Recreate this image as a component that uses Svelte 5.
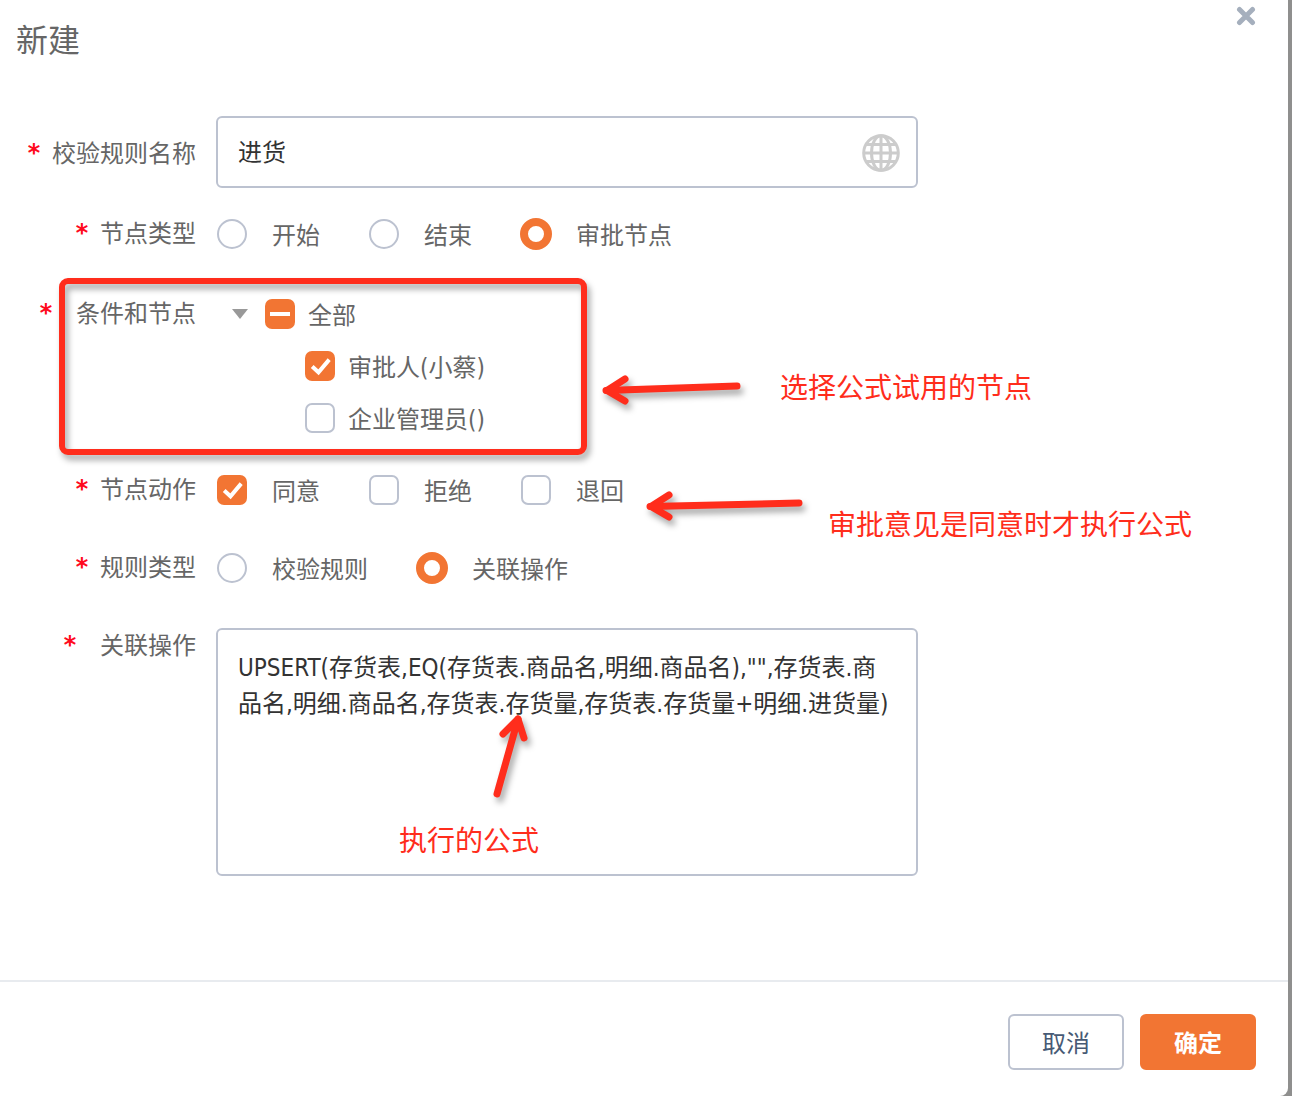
<script>
  let name = $state('进货');
  let nodeType = $state('approve');
  let ruleType = $state('action');
  let formula = $state('UPSERT(存货表,EQ(存货表.商品名,明细.商品名),"",存货表.商品名,明细.商品名,存货表.存货量,存货表.存货量+明细.进货量)');

  const nodeTypes = [
    { value: 'start', label: '开始' },
    { value: 'end', label: '结束' },
    { value: 'approve', label: '审批节点' }
  ];
  const ruleTypes = [
    { value: 'check', label: '校验规则' },
    { value: 'action', label: '关联操作' }
  ];
  let people = $state([
    { label: '审批人(小蔡)', checked: true },
    { label: '企业管理员()', checked: false }
  ]);
  let actions = $state([
    { label: '同意', checked: true },
    { label: '拒绝', checked: false },
    { label: '退回', checked: false }
  ]);
  let allChecked = $derived(people.every((p) => p.checked));
  let someChecked = $derived(people.some((p) => p.checked) && !allChecked);

  function toggleAll(e) {
    for (const p of people) p.checked = e.currentTarget.checked;
  }
</script>

{#snippet tick()}
  <svg class="mark" viewBox="0 0 30 30" aria-hidden="true">
    <path d="M7.2 15.5 L13.5 21.3 L24.2 8.6" fill="none" stroke="#fff" stroke-width="4" />
  </svg>
{/snippet}

<div class="backdrop">
  <div class="dialog" role="dialog" aria-labelledby="title">
    <header>
      <h1 id="title">新建</h1>
      <button class="close" type="button" aria-label="关闭">
        <svg viewBox="0 0 20 20" width="20" height="20" aria-hidden="true">
          <path d="M3.5 3.5 L16.5 16.5 M16.5 3.5 L3.5 16.5" stroke="#a5afbd" stroke-width="5" stroke-linecap="round" />
        </svg>
      </button>
    </header>

    <form id="rule">
      <div class="row name">
        <label class="caption" for="name"><i>*</i>校验规则名称</label>
        <div class="box text">
          <input id="name" type="text" bind:value={name} />
          <button type="button" class="globe" aria-label="多语言">
            <svg viewBox="0 0 38 38" width="38" height="38" fill="none" stroke="#ccc" stroke-width="3" aria-hidden="true">
              <circle cx="19" cy="19" r="17.3" />
              <ellipse cx="19" cy="19" rx="9.5" ry="17.3" />
              <path d="M19 2V36M2 19H36M5 10.5H33M5 27.5H33" />
            </svg>
          </button>
        </div>
      </div>

      <div class="row type" role="radiogroup" aria-labelledby="l-type">
        <span class="caption" id="l-type"><i>*</i>节点类型</span>
        <div class="options">
          {#each nodeTypes as t}
            <label class="option"><span class="slot"><input type="radio" name="nodeType" value={t.value} bind:group={nodeType} /></span><span class="word">{t.label}</span></label>
          {/each}
        </div>
      </div>

      <div class="row nodes" role="group" aria-labelledby="l-nodes">
        <span class="caption wide" id="l-nodes"><i>*</i>条件和节点</span>
        <div class="tree">
          <div class="branch">
            <button type="button" class="caret" aria-label="收起">
              <svg viewBox="0 0 16 10" width="16" height="10" aria-hidden="true"><path d="M0 0H16L8 10Z" fill="#999" /></svg>
            </button>
            <label class="option near">
              <span class="slot">
                <input type="checkbox" checked={allChecked} indeterminate={someChecked} onchange={toggleAll} />
                {#if someChecked}
                  <svg class="mark" viewBox="0 0 30 30" aria-hidden="true"><path d="M5 15H25" stroke="#fff" stroke-width="4" /></svg>
                {:else if allChecked}{@render tick()}{/if}
              </span>
              <span class="word">全部</span>
            </label>
          </div>
          {#each people as p}
            <label class="option near leaf">
              <span class="slot"><input type="checkbox" bind:checked={p.checked} />{#if p.checked}{@render tick()}{/if}</span><span class="word">{p.label}</span>
            </label>
          {/each}
        </div>
      </div>

      <div class="row actions" role="group" aria-labelledby="l-actions">
        <span class="caption" id="l-actions"><i>*</i>节点动作</span>
        <div class="options">
          {#each actions as a}
            <label class="option"><span class="slot"><input type="checkbox" bind:checked={a.checked} />{#if a.checked}{@render tick()}{/if}</span><span class="word">{a.label}</span></label>
          {/each}
        </div>
      </div>

      <div class="row rules" role="radiogroup" aria-labelledby="l-rules">
        <span class="caption" id="l-rules"><i>*</i>规则类型</span>
        <div class="options">
          {#each ruleTypes as t}
            <label class="option"><span class="slot"><input type="radio" name="ruleType" value={t.value} bind:group={ruleType} /></span><span class="word">{t.label}</span></label>
          {/each}
        </div>
      </div>

      <div class="row formula">
        <label class="caption wide" for="formula"><i>*</i>关联操作</label>
        <textarea class="box" id="formula" spellcheck="false" bind:value={formula}></textarea>
      </div>

      <!-- Hand-drawn notes laid over the form -->
      <div class="notes">
        <div class="frame"></div>
        <svg class="arrow a1" viewBox="0 0 160 60" width="160" height="60" aria-hidden="true">
          <path d="M25 19 L7 30.5 L25 41" />
          <path d="M6 30.5 L137 26" />
          <path class="tip" d="M4 30 L20 21 L18 30 L20 39 Z" />
        </svg>
        <svg class="arrow a2" viewBox="0 0 180 60" width="180" height="60" aria-hidden="true">
          <path d="M25 19 L7 30.5 L25 41" />
          <path d="M6 30.5 L155 27" />
          <path class="tip" d="M4 30 L20 21 L18 30 L20 39 Z" />
        </svg>
        <svg class="arrow a3" viewBox="0 0 60 100" width="60" height="100" aria-hidden="true">
          <path d="M13 22 L28 7 L34 26" />
          <path d="M28 7 L7 82" />
          <path class="tip" d="M28 5 L17 19 L26 18 L33 22 Z" />
        </svg>
        <p class="n1">选择公式试用的节点</p>
        <p class="n2">审批意见是同意时才执行公式</p>
        <p class="n3">执行的公式</p>
      </div>
    </form>

    <footer>
      <button type="button" class="btn">取消</button>
      <button type="submit" form="rule" class="btn primary">确定</button>
    </footer>
  </div>
</div>

<style>
  :global(body) {
    margin: 0;
  }
  .backdrop {
    box-sizing: border-box;
    min-height: 100vh;
    display: flex;
    padding-right: 4px;
    background: #8f8f8e;
    font: 24px/52px 'Noto Sans', 'Noto Sans CJK SC', sans-serif;
    color: #666;
  }
  .dialog {
    flex: 1;
    display: flex;
    flex-direction: column;
    background: #fff;
    border-radius: 0 0 8px 0;
  }
  button,
  input,
  textarea {
    font: inherit;
    color: inherit;
    margin: 0;
    padding: 0;
    border: 0;
    background: none;
    outline: 0;
  }
  button {
    cursor: pointer;
  }
  svg {
    display: block;
  }
  header {
    display: flex;
    justify-content: space-between;
    align-items: flex-start;
    height: 116px;
    padding: 0 32px 0 16px;
    box-sizing: border-box;
  }
  h1 {
    margin: 16px 0 0;
    font-size: 32px;
    font-weight: 400;
    line-height: 48px;
  }
  .close {
    margin-top: 6px;
  }
  form {
    position: relative;
    flex: 1;
    padding-bottom: 104px;
  }
  .row {
    display: flex;
    align-items: flex-start;
    gap: 20px;
    padding-right: 32px;
  }
  .type,
  .actions {
    margin-top: 20px;
  }
  .nodes {
    margin-top: 28px;
  }
  .rules {
    margin-top: 26px;
  }
  .formula {
    margin-top: 34px;
  }
  .caption {
    flex: none;
    width: 196px;
    height: 48px;
    display: flex;
    justify-content: flex-end;
    gap: 12px;
    line-height: 50px;
  }
  .name .caption {
    height: 72px;
    line-height: 74px;
  }
  .formula .caption {
    line-height: 34px;
  }
  .caption.wide {
    gap: 24px;
  }
  .caption i {
    width: 12px;
    display: flex;
    justify-content: center;
    font-family: 'DejaVu Sans Mono', monospace;
    font-style: normal;
    font-weight: 700;
    color: #ff0a1e;
  }
  .box {
    flex: 1;
    box-sizing: border-box;
    min-width: 0;
    max-width: 702px;
    border: 2px solid #bcc2d0;
    border-radius: 6px;
    color: #333;
  }
  .text {
    display: flex;
    align-items: center;
    height: 72px;
    padding: 0 16px 0 20px;
  }
  .text input {
    flex: 1;
    min-width: 0;
    line-height: 36px;
  }
  .globe {
    padding-top: 2px;
  }
  textarea {
    height: 248px;
    padding: 20px;
    font-family: 'DejaVu Sans Condensed', 'Noto Sans CJK SC', sans-serif;
    line-height: 36px;
    resize: none;
    overflow: hidden;
    word-break: break-all;
  }
  .options {
    display: flex;
    gap: 48px;
  }
  .option {
    display: flex;
    align-items: center;
    gap: 24px;
    height: 52px;
  }
  .option.near {
    gap: 12px;
  }
  .word {
    padding-top: 2px;
  }
  .slot {
    display: grid;
    place-items: center;
    width: 32px;
    height: 32px;
  }
  .slot > * {
    grid-area: 1 / 1;
  }
  .slot input {
    appearance: none;
    box-sizing: border-box;
    width: 30px;
    height: 30px;
    border: 2px solid #bcc2d0;
    border-radius: 7px;
  }
  .slot input[type='radio'] {
    border-radius: 50%;
  }
  .slot input[type='checkbox']:checked,
  .slot input[type='checkbox']:indeterminate {
    border: 0;
    background: #f27533;
  }
  .slot input[type='radio']:checked {
    width: 32px;
    height: 32px;
    border: 8px solid #f27533;
  }
  .mark {
    width: 30px;
    height: 30px;
    pointer-events: none;
  }
  .branch {
    display: flex;
    align-items: center;
    gap: 16px;
    padding-left: 16px;
  }
  .leaf {
    padding-left: 88px;
    font-family: 'DejaVu Sans Condensed', 'Noto Sans CJK SC', sans-serif;
  }
  .leaf .word {
    padding-top: 4px;
  }
  .notes {
    position: absolute;
    inset: 0;
    pointer-events: none;
    color: #ff2d1c;
  }
  .notes > * {
    position: absolute;
  }
  .frame {
    box-sizing: border-box;
    left: 59px;
    top: 162px;
    width: 528px;
    height: 177px;
    border: 6px solid #ff2d1c;
    border-radius: 9px;
    filter: drop-shadow(3px 5px 3px rgba(0, 0, 0, 0.35));
  }
  .arrow {
    fill: none;
    stroke: #ff2d1c;
    stroke-width: 7;
    stroke-linecap: round;
    stroke-linejoin: round;
    filter: drop-shadow(3px 5px 3px rgba(0, 0, 0, 0.35));
  }
  .tip {
    fill: #ff2d1c;
    stroke: none;
  }
  .a1 {
    left: 600px;
    top: 244px;
  }
  .a2 {
    left: 644px;
    top: 360px;
  }
  .a3 {
    left: 490px;
    top: 596px;
  }
  .notes p {
    margin: 0;
    font-size: 28px;
    line-height: 40px;
    white-space: nowrap;
  }
  .notes .n1 {
    left: 780px;
    top: 251px;
  }
  .notes .n2 {
    left: 828px;
    top: 388px;
  }
  .notes .n3 {
    left: 399px;
    top: 704px;
  }
  footer {
    display: flex;
    justify-content: flex-end;
    gap: 16px;
    padding: 32px 32px 26px;
    border-top: 2px solid #e8ebef;
  }
  .btn {
    box-sizing: border-box;
    width: 116px;
    height: 56px;
    padding-top: 2px;
    border: 2px solid #bcc2d0;
    border-radius: 6px;
    line-height: 50px;
    color: #475a75;
  }
  .primary {
    border-color: #f27533;
    background: #f27533;
    color: #fff;
    font-weight: 700;
  }
</style>
